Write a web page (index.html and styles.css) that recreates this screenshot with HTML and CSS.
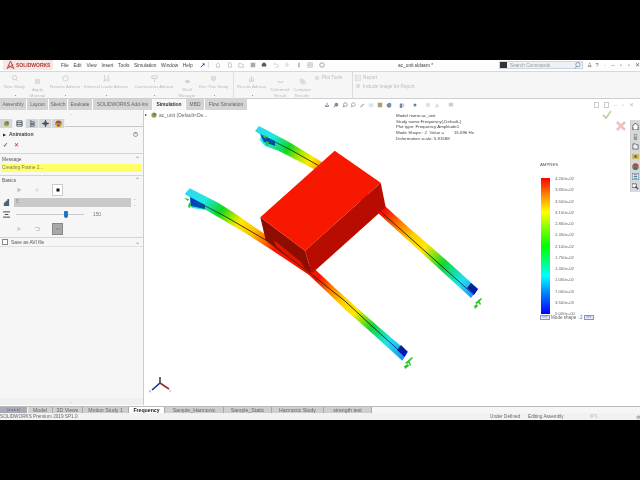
FILE: index.html
```html
<!DOCTYPE html>
<html lang="en">
<head>
<meta charset="utf-8">
<title>SOLIDWORKS</title>
<link rel="stylesheet" href="styles.css">
</head>
<body>
<div class="app">
  <header class="titlebar">
    <div class="logo"><svg class="logo-mark" viewBox="0 0 10 9"><path d="M5 0 1 9M5 0l4 9M2 5l6 3M8 4 2 8" stroke="#c0342c" fill="none" stroke-width="1"/></svg><span class="logo-text">SOLIDWORKS</span></div>
    <nav class="menu"><span>File</span><span>Edit</span><span>View</span><span>Insert</span><span>Tools</span><span>Simulation</span><span>Window</span><span>Help</span></nav>
    <svg class="pin" viewBox="0 0 6 6"><path d="M1 5 5 1M3 1h2v2" stroke="#2a5fa8" fill="none" stroke-width="1.2"/></svg>
    <div class="quick">
      <svg viewBox="0 0 8 8"><path d="M1 4 4 1l3 3M2 4v3h4V4" fill="none" stroke="#bbb"/></svg>
      <svg viewBox="0 0 8 8"><path d="M2 1h3l1 1v5H2z" fill="none" stroke="#bbb"/></svg>
      <svg viewBox="0 0 8 8"><path d="M1 2h3l1 1h2v4H1z" fill="none" stroke="#bbb"/></svg>
      <svg viewBox="0 0 8 8"><rect x="1" y="1" width="6" height="6" fill="#aaa"/></svg>
      <svg viewBox="0 0 8 8"><path d="M2 1h4v2h1v3H1V3h1z" fill="#555"/></svg>
      <svg viewBox="0 0 8 8"><path d="M1 3h4a2 2 0 0 1 0 4H3M1 3l2-2" fill="none" stroke="#ccc"/></svg>
      <svg viewBox="0 0 8 8"><path d="M3 1v5l3-2z" fill="none" stroke="#ccc"/></svg>
      <svg viewBox="0 0 8 8"><rect x="3" y="1" width="2" height="6" fill="#aaa"/></svg>
      <svg viewBox="0 0 8 8"><path d="M1 1h6v6H1zM4 1v6M1 4h6" fill="none" stroke="#bbb"/></svg>
      <svg viewBox="0 0 8 8"><circle cx="4" cy="4" r="3" fill="none" stroke="#888"/></svg>
    </div>
    <div class="doc-name">ac_unit.sldasm *</div>
    <div class="search"><span class="search-term"></span><span class="search-text">Search Commands</span><svg class="search-lens" viewBox="0 0 8 8"><circle cx="4.5" cy="3" r="2.5" fill="none" stroke="#7a93b5"/><path d="M3 5 1 7.5" stroke="#7a93b5"/></svg></div>
    <div class="winctl"><span>♙</span><span>?</span><span>·</span><span>–</span><span>▫</span><span>▫</span><span>✕</span></div>
  </header>

  <section class="ribbon">
    <div class="rb"><svg viewBox="0 0 8 8"><circle cx="4" cy="3" r="2.4" fill="none" stroke="#ccc"/><path d="m6 5 2 2" stroke="#ccc"/></svg><span>New Study</span></div>
    <div class="rb low"><svg viewBox="0 0 8 8"><rect x="1" y="1" width="6" height="6" fill="#ddd"/></svg><span>Apply<br>Material</span></div>
    <div class="rb"><svg viewBox="0 0 8 8"><circle cx="4" cy="4" r="3" fill="none" stroke="#ccc"/></svg><span>Fixtures Advisor</span></div>
    <div class="rb"><svg viewBox="0 0 8 8"><path d="M2 0v7M6 0v7M0 5l2 2 2-2M4 5l2 2 2-2" fill="none" stroke="#ccc"/></svg><span>External Loads Advisor</span></div>
    <div class="rb"><svg viewBox="0 0 8 8"><path d="M1 1h6v3H1zM4 4v4" fill="none" stroke="#ccc"/></svg><span>Connections Advisor</span></div>
    <div class="rb low"><svg viewBox="0 0 8 8"><ellipse cx="4" cy="4" rx="3" ry="2" fill="#d5d5d5"/></svg><span>Shell<br>Manager</span></div>
    <div class="rb"><svg viewBox="0 0 8 8"><path d="M1 1h6v4L4 8 1 5z" fill="#ddd"/></svg><span>Run This Study</span></div>
    <div class="rb sep"><svg viewBox="0 0 8 8"><path d="M1 7h6M2 7V4M4 7V1M6 7V3" stroke="#ccc" fill="none"/></svg><span>Results Advisor</span></div>
    <div class="rb low"><svg viewBox="0 0 8 8"><path d="M1 4q3 2 6 0" stroke="#bbb" fill="none"/></svg><span>Deformed<br>Result</span></div>
    <div class="rb low"><svg viewBox="0 0 8 8"><path d="M1 1h4v4H1zM3 3h4v4H3z" fill="#e2e2e2" stroke="#d0d0d0" stroke-width=".5"/></svg><span>Compare<br>Results</span></div>
    <div class="rb-plot"><svg viewBox="0 0 8 8"><circle cx="4" cy="4" r="3" fill="#ddd"/></svg><span>Plot Tools</span></div>
    <div class="rb-report">
      <div class="rb-line"><svg viewBox="0 0 8 8"><path d="M1 0h6v8H1zM3 3h2M3 5h2" fill="none" stroke="#ccc"/></svg><span>Report</span></div>
      <div class="rb-line"><svg viewBox="0 0 8 8"><circle cx="4" cy="4" r="3" fill="#ddd"/></svg><span>Include Image for Report</span></div>
    </div>
  </section>

  <div class="tabrow">
    <nav class="tabs">
      <span class="tab t26">Assembly</span><span class="tab t21">Layout</span><span class="tab t18">Sketch</span><span class="tab t24">Evaluate</span><span class="tab t59">SOLIDWORKS Add-Ins</span><span class="tab t32 active">Simulation</span><span class="tab t18">MBD</span><span class="tab t42">Flow Simulation</span>
    </nav>
    <div class="headsup">
      <svg viewBox="0 0 8 8"><path d="M4 1v5M2 4v2h4V4" fill="none" stroke="#5a7a9a"/></svg>
      <svg viewBox="0 0 8 8"><circle cx="4.5" cy="3.5" r="2.5" fill="#7a8a9a"/><path d="M3 5 1 7" stroke="#666"/></svg>
      <svg viewBox="0 0 8 8"><circle cx="4.5" cy="3.5" r="2.5" fill="none" stroke="#7a8a9a"/><path d="M3 5 1 7" stroke="#666"/></svg>
      <svg viewBox="0 0 8 8"><circle cx="4.5" cy="3.5" r="2.5" fill="none" stroke="#999"/><path d="M3 5 1 7" stroke="#888"/></svg>
      <svg viewBox="0 0 8 8"><path d="M1 7 6 2l1 1-4 4z" fill="#a8a8a8"/></svg>
      <svg viewBox="0 0 8 8"><rect x="1" y="2" width="6" height="5" fill="#dde4ee"/></svg>
      <svg viewBox="0 0 8 8"><rect x="1" y="1" width="6" height="6" fill="#b0a070"/></svg>
      <svg viewBox="0 0 8 8"><path d="M1 3 4 1l3 1v4L4 8 1 6z" fill="#6f8fa8"/></svg>
      <svg viewBox="0 0 8 8" class="gap"><path d="M1 2h3v6H1z" fill="#6a8aa8"/><path d="M4 2h3v5H4z" fill="#ccd"/></svg>
      <svg viewBox="0 0 8 8" class="gap"><circle cx="4" cy="4" r="2" fill="#6f7f8f"/></svg>
      <svg viewBox="0 0 8 8" class="gap"><circle cx="4" cy="4" r="3" fill="#e2e2e2"/></svg>
      <svg viewBox="0 0 8 8"><path d="M1 7 4 1l3 6z" fill="#ddd"/></svg>
      <svg viewBox="0 0 8 8" class="gap"><rect x="1" y="1" width="6" height="5" fill="#c8d4c8"/></svg>
    </div>
    <div class="viewctl"><span class="vc-box"></span><span class="vc-box"></span><span>–</span><span>▫</span><span>✕</span></div>
  </div>

  <main class="main">
    <aside class="panel">
      <div class="grip">▪</div>
      <div class="ptabs">
        <span class="ptab"><svg viewBox="0 0 8 8"><circle cx="4" cy="4" r="3" fill="#a89a3c"/><circle cx="5" cy="3" r="1.4" fill="#4a7a9a"/></svg></span>
        <span class="ptab on"><svg viewBox="0 0 8 8"><path d="M1 1h6v6H1zM1 3h6M1 5h6" fill="none" stroke="#456"/></svg></span>
        <span class="ptab"><svg viewBox="0 0 8 8"><path d="M2 0v8M2 2h4v2H2M2 5h4v2H2" fill="none" stroke="#567"/></svg></span>
        <span class="ptab"><svg viewBox="0 0 8 8"><path d="M4 0v8M0 4h8" stroke="#345"/><circle cx="4" cy="4" r="2" fill="none" stroke="#345"/></svg></span>
        <span class="ptab"><svg viewBox="0 0 8 8"><circle cx="4" cy="4" r="3.5" fill="#b8483c"/><path d="M.5 4h7v1a3.5 3 0 0 1-7 0z" fill="#d8b030"/><circle cx="4" cy="6" r="1.5" fill="#4a6a9a"/></svg></span>
      </div>
      <div class="phead"><span class="tri">▶</span><b>Animation</b><span class="help">?</span></div>
      <div class="okrow"><span class="ok">✓</span><span class="no">✕</span></div>
      <div class="sect"><span>Message</span><span class="chev">⌃</span></div>
      <div class="msg">Creating Frame 2...</div>
      <div class="sect basics"><span>Basics</span><span class="chev">⌃</span></div>
      <div class="ctrls top">
        <svg viewBox="0 0 8 8"><path d="M2 1v6l5-3z" fill="#bbb"/></svg>
        <svg viewBox="0 0 8 8"><path d="M3 2v4M5 2v4" stroke="#ccc"/></svg>
        <span class="boxed"><svg viewBox="0 0 8 8"><rect x="2" y="2" width="4" height="4" fill="#111"/></svg></span>
      </div>
      <div class="spinrow">
        <svg viewBox="0 0 8 8"><path d="M1 7V4h2V2h2V0h2v8H1z" fill="#4a6278"/></svg>
        <div class="spin">5</div>
        <span class="spinner">⌃<br>⌄</span>
      </div>
      <div class="sliderrow">
        <svg viewBox="0 0 8 8"><path d="M0 1h8M0 7h8M2 4h4" stroke="#333"/></svg>
        <div class="track"><span class="thumb"></span></div>
        <span class="val">150</span>
      </div>
      <div class="ctrls bot">
        <svg viewBox="0 0 8 8"><path d="M2 1v6l5-3z" fill="#ccc"/></svg>
        <svg viewBox="0 0 8 8"><path d="M1 2h6v4H3" fill="none" stroke="#bbb"/></svg>
        <span class="boxed dark"><svg viewBox="0 0 8 8"><path d="M1 4h6" stroke="#777"/></svg></span>
      </div>
      <div class="sect save"><label class="chk"><span class="box"></span>Save as AVI file</label><span class="chev">⌄</span></div>
      <div class="grip bottom">▪</div>
    </aside>
    <span class="handle">›</span>
    <section class="view">
      <svg class="model" viewBox="145 110 495 295" aria-hidden="true">
        <defs>
          <linearGradient id="gf" gradientUnits="userSpaceOnUse" x1="186" y1="190" x2="406" y2="356">
            <stop offset="0" stop-color="#2fd8f0"/><stop offset=".08" stop-color="#20e8e0"/><stop offset=".15" stop-color="#10d820"/><stop offset=".2" stop-color="#b0e800"/><stop offset=".23" stop-color="#ffe800"/><stop offset=".29" stop-color="#ffc000"/><stop offset=".34" stop-color="#ff7000"/><stop offset=".39" stop-color="#f81400"/><stop offset=".58" stop-color="#f81400"/><stop offset=".64" stop-color="#ff8000"/><stop offset=".7" stop-color="#ffd000"/><stop offset=".76" stop-color="#ffe800"/><stop offset=".84" stop-color="#10d830"/><stop offset=".92" stop-color="#20e0f0"/><stop offset="1" stop-color="#2090f0"/>
          </linearGradient>
          <linearGradient id="gb" gradientUnits="userSpaceOnUse" x1="256" y1="128" x2="477" y2="294">
            <stop offset="0" stop-color="#2fd8f0"/><stop offset=".07" stop-color="#20e8e0"/><stop offset=".14" stop-color="#10d820"/><stop offset=".19" stop-color="#b0e800"/><stop offset=".23" stop-color="#ffe800"/><stop offset=".3" stop-color="#ff8000"/><stop offset=".37" stop-color="#f81400"/><stop offset=".56" stop-color="#f81400"/><stop offset=".63" stop-color="#ff8000"/><stop offset=".69" stop-color="#ffd000"/><stop offset=".75" stop-color="#ffe800"/><stop offset=".84" stop-color="#10d830"/><stop offset=".93" stop-color="#20e0f0"/><stop offset="1" stop-color="#2090f0"/>
          </linearGradient>
          <linearGradient id="df" gradientUnits="userSpaceOnUse" x1="186" y1="190" x2="406" y2="356">
            <stop offset="0" stop-color="#0020d0"/><stop offset=".07" stop-color="#0050b0"/><stop offset=".145" stop-color="#104010"/><stop offset=".25" stop-color="#302800"/><stop offset=".8" stop-color="#202000"/><stop offset=".93" stop-color="#103050"/><stop offset="1" stop-color="#0018c0"/>
          </linearGradient>
          <linearGradient id="db" gradientUnits="userSpaceOnUse" x1="256" y1="128" x2="477" y2="294">
            <stop offset="0" stop-color="#0020d0"/><stop offset=".07" stop-color="#0050b0"/><stop offset=".145" stop-color="#104010"/><stop offset=".25" stop-color="#302800"/><stop offset=".8" stop-color="#202000"/><stop offset=".93" stop-color="#103050"/><stop offset="1" stop-color="#0018c0"/>
          </linearGradient>
        </defs>
        <polygon fill="url(#gb)" points="260,126 290,142 323,162 355,184 387,207 408,226 430,245 455,267 479,289 472,298 448,276 425,255 402,234 379,213 346,190 313,168 280,151 266,146 261,140 262,135 256,131"/>
        <polyline fill="none" stroke="url(#db)" stroke-width=".9" points="262,135 292,150 322,167 350,187 381,211 428,253 475,295"/>
        <polygon fill="url(#db)" points="261,134 276,141 276,146 265,142"/>
        <polygon fill="url(#db)" points="479,289 475.5,294.5 468,288 472,283"/>
        <polygon fill="url(#gf)" points="190.7,188.3 205,195.5 220,203.3 235,212.8 250,223.3 265,233.5 285,248 300,259 316.7,270 336,288 356.7,306.7 382,329 408.7,351.7 403.3,360.7 375,335 346.7,310 328,292 310,275 290,261.5 270,248.3 246.7,233.3 225,220.5 207,210 193,208 190,204 192,198 185.7,194"/>
        <polyline fill="none" stroke="url(#df)" stroke-width=".9" points="191.7,198.3 226.7,216.7 266.7,240 313.3,275 346.7,301.7 375,328 405,355"/>
        <polygon fill="url(#df)" points="191,197 206,205 206,209 192,206"/>
        <polygon fill="url(#df)" points="408.7,351.7 405.5,357 398,350 402,345"/>
        <g fill="#28c828">
          <path d="M262 135l6 1-1 3zM267 141l3 1-1 4-2-1zM185 198l5 1-1 2zM190 203l2 1-1 4-2-1z"/>
          <path d="M406 363l7-6 1 1-6 6zM405 366l4-2 1 2-4 3zM410 360l2 5-1 1-2-4z"/>
          <path d="M476 303l6-5 1 1-5 5zM475 306l3-2 1 2-3 3zM480 300l2 4-1 1-2-3z"/>
        </g>
        <path fill="#8f0c00" d="M261.3 217.3 306 250.7 312.7 273.3 266.7 240z"/>
        <path fill="#e01600" d="M275 240 302 262 306 269 290 257 277 246z"/>
        <path fill="#b90c00" d="M381.7 182.7 386.7 207.3 316.7 270 312.7 273.3 306 250.7z"/>
        <path fill="#f81800" d="M335.7 150.7 381.7 182.7 306 250.7 261.3 217.3z"/>
        <path fill="none" d="M161 383V377" stroke="#1c5a30" stroke-width="1.6"/>
        <path fill="none" d="M161 383 153 390" stroke="#1a2a9a" stroke-width="1.6"/>
        <path fill="none" d="M161 383 170 389" stroke="#9a2a2a" stroke-width="1.6"/>
        <path fill="#999" d="M150 390l2 1-1 2zM170 390l2 1-1 1z"/>
      </svg>
      <span class="tree-arrow">▸</span>
      <div class="tree"><svg viewBox="0 0 8 8"><circle cx="4" cy="4" r="3.5" fill="#a89a3c"/><circle cx="5" cy="3" r="1.8" fill="#567ea0"/></svg><span>ac_unit (Default&lt;De...</span></div>
      <div class="info">
        <div>Model name:ac_unit</div>
        <div>Study name:Frequency(-Default-)</div>
        <div>Plot type: Frequency Amplitude1</div>
        <div>Mode Shape : 2&nbsp; Value =&nbsp; &nbsp; &nbsp; &nbsp; 15.696 Hz</div>
        <div>Deformation scale: 5.81588</div>
      </div>
      <div class="legend">
        <div class="lg-title">AMPRES</div>
        <div class="lg-body">
          <div class="lg-bar"></div>
          <div class="lg-labels"><span>4.200e-02</span><span>3.850e-02</span><span>3.500e-02</span><span>3.150e-02</span><span>2.800e-02</span><span>2.450e-02</span><span>2.100e-02</span><span>1.750e-02</span><span>1.400e-02</span><span>1.050e-02</span><span>7.000e-03</span><span>3.500e-03</span><span>0.000e+00</span></div>
        </div>
        <div class="lg-mode"><span class="lg-btn">&lt;&lt;&lt;</span><span>Mode shape : 2</span><span class="lg-btn">&gt;&gt;&gt;</span></div>
      </div>
      <svg class="confirm ok-big" viewBox="0 0 10 10"><path d="M1 5l3 3 5-7" fill="none" stroke="#bfd6a8" stroke-width="2"/></svg>
      <svg class="confirm no-big" viewBox="0 0 10 10"><path d="M1 1l8 8M9 1 1 9" fill="none" stroke="#f0c0bc" stroke-width="2.6"/></svg>
      <div class="taskpane">
        <span><svg viewBox="0 0 8 8"><path d="M0 4 4 0l4 4M1 4v4h6V4" fill="#fff" stroke="#444"/></svg></span>
        <span><svg viewBox="0 0 8 8"><path d="M2 1h4v7H2z" fill="#999"/><circle cx="4" cy="3" r="1" fill="#ddd"/></svg></span>
        <span><svg viewBox="0 0 8 8"><path d="M1 1h3l1 1h2v5H1z" fill="#eee" stroke="#667"/></svg></span>
        <span><svg viewBox="0 0 8 8"><rect x="0" y="1" width="8" height="6" fill="#c8b860"/><circle cx="4" cy="4" r="1.4" fill="#555"/></svg></span>
        <span><svg viewBox="0 0 8 8"><circle cx="4" cy="4" r="3.6" fill="#b8483c"/><path d="M.5 4h7v1a3.5 3 0 0 1-7 0z" fill="#5a9a5a"/><circle cx="4" cy="6" r="1.5" fill="#3a5a9a"/></svg></span>
        <span><svg viewBox="0 0 8 8"><rect x="0" y="0" width="8" height="8" fill="#eef" stroke="#456"/><path d="M2 2h4M2 4h4M2 6h4" stroke="#2a7a8a"/></svg></span>
        <span><svg viewBox="0 0 8 8"><path d="M0 1h5v4H0z" fill="#fff" stroke="#567"/><path d="M4 4l3 3" stroke="#345" stroke-width="1.4"/></svg></span>
      </div>
    </section>
  </main>

  <div class="sheets">
    <span class="nav">|◂ ◂ ▸ ▸|</span>
    <span class="sheet w25">Model</span><span class="sheet w30">3D Views</span><span class="sheet w46">Motion Study 1</span><span class="sheet w36 active">Frequency</span><span class="sheet w59">Sample_Harmonic</span><span class="sheet w48">Sample_Static</span><span class="sheet w52">Harmonic Study</span><span class="sheet w48">strength test</span>
  </div>
  <footer class="status">
    <span class="product">SOLIDWORKS Premium 2019 SP1.0</span>
    <span class="st-a">Under Defined</span><span class="st-b">Editing Assembly</span><span class="st-c">IPS</span><span class="st-d">⚙</span>
  </footer>
</div>
</body>
</html>
```
FILE: styles.css
```css
* { box-sizing: border-box; }
html, body { margin: 0; height: 100%; background: #000; }
body { padding-top: 60px; overflow: hidden; font-family: "Liberation Sans", Arial, sans-serif; font-size: 4.8px; color: #555; }
svg { display: block; flex: none; }
.app { width: 640px; height: 360px; background: #fff; display: flex; flex-direction: column; overflow: hidden; filter: blur(.3px); }

.titlebar { height: 10.5px; display: flex; align-items: center; background: #fdfdfd; flex: none; }
.titlebar > * { flex: none; }
.logo { width: 50px; height: 10px; margin-left: 3px; background: #f4e7e6; display: flex; align-items: center; padding-left: 3px; gap: 1px; }
.logo-mark { width: 9px; height: 8px; }
.logo-text { font-weight: 700; font-size: 5px; color: #b03a34; white-space: nowrap; }
.menu { display: flex; gap: 4.7px; margin-left: 8px; width: 139px; font-size: 4.8px; color: #444; }
.pin { width: 5px; height: 5px; }
.quick { display: flex; gap: 5.5px; margin-left: 3px; width: 160px; border-left: 1px solid #ddd; }
.quick svg { width: 6px; height: 6px; }
.quick svg:first-child { margin-left: 6px; }
.doc-name { margin-left: 30px; width: 101px; font-size: 4.8px; color: #444; }
.search { width: 84px; height: 8px; background: #edf2f8; border: 1px solid #ccd6e2; display: flex; align-items: center; color: #999; font-size: 4.7px; }
.search-term { width: 7px; height: 6px; background: #333; margin-right: 3px; }
.search-text { flex: 1; }
.search-lens { width: 7px; height: 7px; margin-right: 1px; }
.winctl { display: grid; grid-template-columns: repeat(7, 8px); margin-left: 2px; font-size: 5.5px; color: #666; text-align: center; }

.ribbon { height: 28.5px; flex: none; background: #f6f6f6; border-top: 1px solid #d8d8d8; border-bottom: 1px solid #cfcfcf; display: grid; grid-template-columns: 29px 17px 38px 44px 52px 14px 39px 36px 22px 22px 39px 1fr; color: #bbb; font-size: 4.3px; }
.rb { position: relative; display: flex; flex-direction: column; align-items: center; padding-top: 3px; text-align: center; white-space: nowrap; line-height: 6px; gap: 2px; }
.rb::after { content: ""; position: absolute; left: 50%; top: 23.5px; width: 1px; height: 1px; background: #999; }
.rb.low::after { display: none; }
.rb svg { width: 7px; height: 7px; }
.rb.low { padding-top: 6px; }
.rb.sep { border-left: 1px solid #e0e0e0; }
.rb-plot { display: flex; gap: 2px; padding: 3px 0 0 1px; white-space: nowrap; font-size: 4.7px; }
.rb-plot svg { width: 6px; height: 6px; }
.rb-report { border-left: 1px solid #ddd; padding: 3px 0 0 2px; display: flex; flex-direction: column; gap: 2.5px; font-size: 4.7px; }
.rb-line { display: flex; gap: 2px; align-items: center; white-space: nowrap; }
.rb-line svg { width: 6px; height: 6px; }

.tabrow { height: 11px; flex: none; display: flex; align-items: stretch; background: #fff; }
.tabs { display: flex; gap: 1px; height: 11px; width: 247px; font-size: 4.9px; flex: none; }
.tab { background: #d4d4d4; display: flex; align-items: center; justify-content: center; color: #666; white-space: nowrap; }
.tab.active { background: #f6f6f6; color: #333; font-weight: 700; }
.t18 { width: 18px; } .t21 { width: 21px; } .t24 { width: 24px; } .t26 { width: 26px; } .t32 { width: 32px; } .t42 { width: 42px; } .t59 { width: 59px; }
.headsup { display: flex; align-items: center; gap: 2.8px; margin-left: 77px; width: 270px; flex: none; }
.headsup svg { width: 6px; height: 6px; }
.headsup .gap { margin-left: 4.5px; }
.viewctl { display: flex; align-items: center; gap: 5px; font-size: 5.5px; color: #bbb; }
.vc-box { width: 5px; height: 6px; border: 1px solid #ccc; }

.main { flex: 1; min-height: 0; display: flex; position: relative; }
.panel { width: 144px; flex: none; background: #f6f6f6; display: flex; flex-direction: column; border-right: 1px solid #ccc; }
.grip { height: 9px; text-align: center; color: #bbb; font-size: 3px; line-height: 8px; flex: none; }
.grip.bottom { margin-top: auto; height: 7px; background: #f0f0f0; }
.ptabs { display: flex; height: 8px; border-bottom: 1px solid #c8c8c8; flex: none; }
.ptab { width: 13px; height: 9px; background: #d6d6d6; border-right: 1px solid #eee; display: flex; align-items: center; justify-content: center; }
.ptab.on { background: #f6f6f6; }
.ptab svg { width: 7px; height: 7px; }
.phead { display: flex; align-items: center; height: 11px; padding: 3px 5px 0 3px; font-size: 5px; color: #444; flex: none; }
.tri { font-size: 4px; margin-right: 3px; color: #222; }
.help { margin-left: auto; width: 5px; height: 5px; border-radius: 50%; border: 1px solid #999; font-size: 3.5px; line-height: 3px; text-align: center; }
.okrow { display: flex; gap: 6px; height: 16px; padding: 3px 0 0 3px; font-size: 6px; border-bottom: 1px solid #d4d4d4; flex: none; }
.ok { color: #2a8a2a; font-weight: 700; }
.no { color: #c02020; }
.sect { display: flex; justify-content: space-between; align-items: center; height: 10px; padding: 0 3px 0 2px; flex: none; }
.chev { font-size: 6px; line-height: 4px; color: #777; }
.msg { height: 8px; margin: 0 1px; background: #ffff66; color: #777; line-height: 7.5px; padding-left: 1px; flex: none; }
.sect.basics { margin-top: 3px; border-top: 1px solid #d4d4d4; height: 9px; }
.ctrls { display: grid; grid-template-columns: 6px 6px 11px; column-gap: 12px; align-items: center; padding-left: 16px; flex: none; }
.ctrls svg { width: 6px; height: 6px; }
.ctrls.top { height: 12px; }
.ctrls.bot { height: 12px; margin-top: 4px; }
.boxed { width: 11px; height: 12px; border: 1px solid #ccc; background: #fff; display: flex; align-items: center; justify-content: center; }
.boxed.dark { background: #a8a8a8; border-color: #888; }
.spinrow { display: flex; align-items: center; height: 9px; margin-top: 2px; padding-left: 3px; flex: none; }
.spinrow > svg { width: 7px; height: 7px; }
.spin { width: 117px; height: 9px; margin-left: 4px; background: #c9c9c9; color: #888; padding-left: 2px; line-height: 8px; }
.spinner { margin-left: 2px; font-size: 4px; line-height: 4px; color: #aaa; }
.sliderrow { display: flex; align-items: center; height: 9px; margin-top: 3px; padding-left: 3px; flex: none; }
.sliderrow > svg { width: 7px; height: 7px; }
.track { width: 68px; height: 1px; margin-left: 6px; background: #ccc; position: relative; }
.thumb { position: absolute; left: 48px; top: -3px; width: 4px; height: 7px; background: #1e73c8; border-radius: 1px 1px 2px 2px; }
.val { margin-left: 9px; color: #777; }
.sect.save { border-top: 1px solid #d4d4d4; margin-top: 2px; height: 10px; border-bottom: 1px solid #e0e0e0; }
.chk { display: flex; align-items: center; gap: 3px; }
.box { width: 6px; height: 6px; border: 1px solid #888; background: #fff; }
.handle { position: absolute; left: 144px; top: 135px; width: 4px; height: 15px; background: #f2f2f2; border: 1px solid #ddd; color: #777; font-size: 4px; line-height: 12px; text-align: center; }

.view { flex: 1; position: relative; background: #fff; }
.model { position: absolute; inset: 0; width: 495px; height: 295px; }
.tree-arrow { position: absolute; left: 1px; top: 2px; font-size: 4px; color: #333; }
.tree { position: absolute; left: 7px; top: 2px; display: flex; align-items: center; gap: 2px; color: #666; white-space: nowrap; font-size: 5px; }
.tree svg { width: 6px; height: 6px; }
.info { position: absolute; left: 252px; top: 3px; line-height: 5.7px; font-size: 4.4px; color: #444; white-space: nowrap; }
.legend { position: absolute; left: 396px; top: 52px; width: 60px; }
.lg-title { font-size: 4.3px; color: #555; height: 16px; }
.lg-body { display: flex; height: 136px; }
.lg-bar { width: 9px; margin-left: 1px; height: 136px; background: linear-gradient(#ff0000 0%, #ff8000 12%, #ffff00 25%, #80ff00 37%, #00ff00 50%, #00ff80 62%, #00ffff 72%, #0080ff 85%, #0000ff 100%); }
.lg-labels { display: flex; flex-direction: column; justify-content: space-between; margin: -2px 0 -2px 5px; font-size: 4.2px; line-height: 5px; color: #666; white-space: nowrap; }
.lg-mode { display: flex; align-items: center; gap: 1px; font-size: 4.6px; color: #666; margin-top: 1px; white-space: nowrap; }
.lg-btn { width: 10px; height: 5px; color: #4a5aa8; border: 1px solid #8a94cc; background: #e8eaf8; font-size: 3px; line-height: 3px; text-align: center; }
.confirm { position: absolute; }
.ok-big { left: 458px; top: 0; width: 10px; height: 10px; }
.no-big { left: 472px; top: 11px; width: 10px; height: 10px; }
.taskpane { position: absolute; right: 0; top: 10px; width: 10px; display: flex; flex-direction: column; background: #d8d8d8; border-left: 1px solid #ccc; padding: 1px 0; }
.taskpane span { height: 10px; display: flex; align-items: center; justify-content: center; }
.taskpane svg { width: 7px; height: 7px; }

.sheets { height: 7.5px; flex: none; margin-top: 1px; border-top: 1px solid #bbb; display: flex; background: #f6f6f6; font-size: 5.2px; line-height: 6.5px; color: #666; }
.nav { width: 27px; background: #a7a9b4; color: #667; font-size: 3.5px; text-align: center; margin-right: 1px; white-space: nowrap; }
.sheet { background: #cfcfcf; text-align: center; white-space: nowrap; border-right: 1px solid #aaa; }
.sheet.active { background: #fff; font-weight: 700; color: #222; }
.w25 { width: 25px; } .w30 { width: 30px; } .w36 { width: 36px; } .w46 { width: 46px; } .w48 { width: 48px; } .w52 { width: 52px; } .w59 { width: 59px; }
.status { height: 7px; flex: none; background: #f2f2f2; display: flex; align-items: center; font-size: 4.7px; color: #666; white-space: nowrap; }
.product { width: 490px; }
.st-a { width: 38px; }
.st-b { width: 62px; }
.st-c { width: 46px; color: #bbb; }
.st-d { font-size: 5px; color: #777; }
```
